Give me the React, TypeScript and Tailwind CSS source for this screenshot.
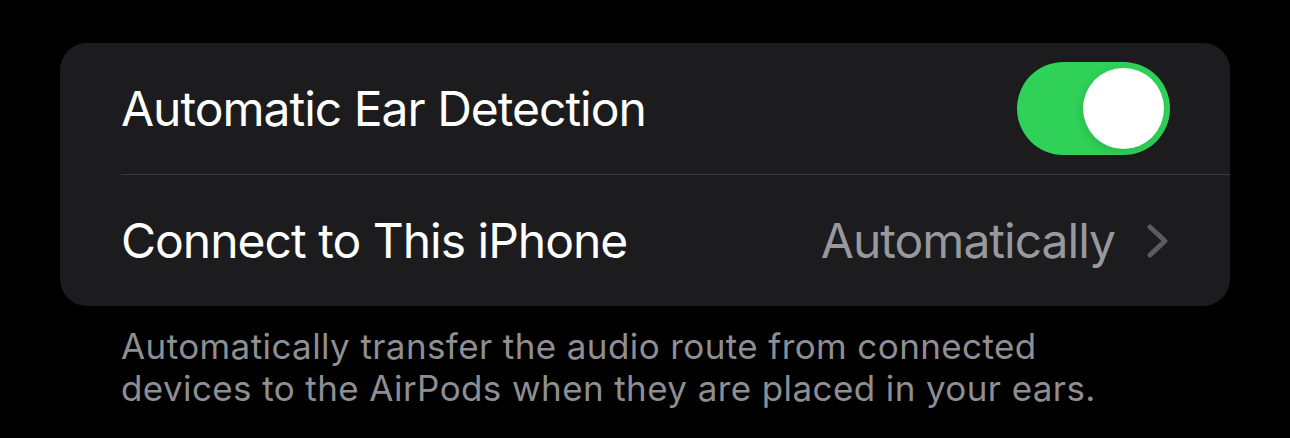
import React from "react";

export default function App() {
  return (
    <div
      className="w-[1290px] h-[438px] bg-black px-[60px] pt-[43px] overflow-hidden"
      style={{ fontFamily: "Inter, 'Noto Sans', sans-serif" }}
    >
      <div className="bg-[#1c1c1e] rounded-[27px] overflow-hidden">
        <div className="h-[131px] flex items-center justify-between pl-[61px] pr-[60px]">
          <span className="text-white text-[48px] tracking-[-1px] leading-none">
            Automatic Ear Detection
          </span>
          <div className="w-[153px] h-[93px] rounded-full bg-[#30d158] p-[6px] flex justify-end">
            <div className="w-[81px] h-[81px] rounded-full bg-white shadow-[-2px_3px_8px_rgba(0,0,0,0.12)]" />
          </div>
        </div>
        <div className="ml-[61px] h-px bg-[#3a3a3c]" />
        <div className="h-[131px] flex items-center justify-between pl-[61px] pr-[62px]">
          <span className="text-white text-[48px] tracking-[-1px] leading-none">
            Connect to This iPhone
          </span>
          <div className="flex items-center gap-[32px]">
            <span className="text-[#98989f] text-[48px] tracking-[-1px] leading-none">
              Automatically
            </span>
            <svg width="21" height="34" viewBox="0 0 21 34" fill="none">
              <path
                d="M3 3 L18 17 L3 31"
                stroke="#5b5b60"
                strokeWidth="5"
                strokeLinecap="round"
                strokeLinejoin="round"
              />
            </svg>
          </div>
        </div>
      </div>
      <p className="pl-[61px] pt-[19px] text-[#8e8e93] text-[35px] leading-[42px] tracking-[0.4px]">
        Automatically transfer the audio route from connected
        <br />
        devices to the AirPods when they are placed in your ears.
      </p>
    </div>
  );
}
